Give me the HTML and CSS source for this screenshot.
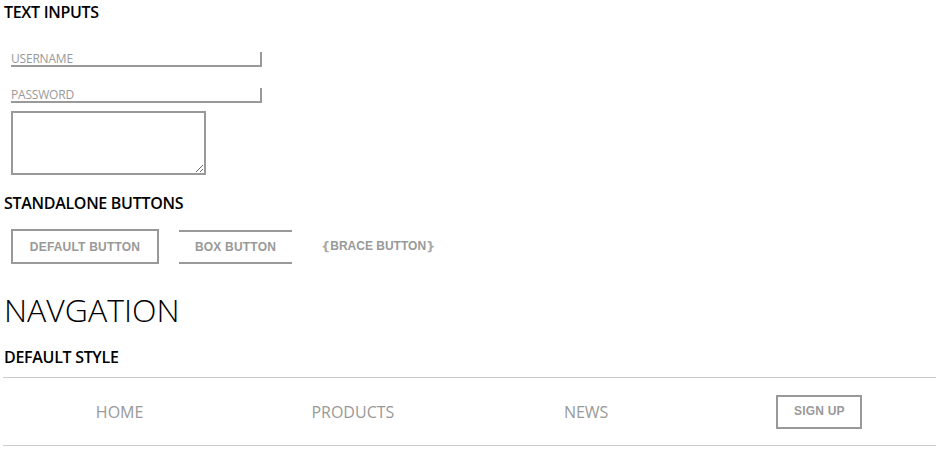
FILE: index.html
```html
<!DOCTYPE html>
<html>
<head>
<meta charset="utf-8">
<link rel="stylesheet" href="styles.css">
</head>
<body>
<div class="page">
  <h3 class="label">TEXT INPUTS</h3>
  <div class="fields">
    <input class="field" type="text" placeholder="USERNAME">
    <input class="field field-pass" type="password" placeholder="PASSWORD">
    <textarea class="area"></textarea>
  </div>
  <h3 class="label label-buttons">STANDALONE BUTTONS</h3>
  <div class="buttons">
    <button class="btn btn-default">DEFAULT BUTTON</button>
    <button class="btn btn-box">BOX BUTTON</button>
    <button class="btn btn-brace"><span class="brace">{</span>BRACE BUTTON<span class="brace">}</span></button>
  </div>
  <h1 class="title">NAVGATION</h1>
  <h3 class="label label-nav">DEFAULT STYLE</h3>
  <nav class="nav">
    <a class="nav-item">HOME</a>
    <a class="nav-item">PRODUCTS</a>
    <a class="nav-item">NEWS</a>
    <div class="nav-item"><button class="btn btn-signup">SIGN UP</button></div>
  </nav>
</div>
</body>
</html>
```

FILE: styles.css
```css
* { box-sizing: border-box; }
html, body { margin: 0; padding: 0; background: #fff; }
body { font-family: "Open Sans", "Liberation Sans", sans-serif; color: #000; }
.page { width: 936px; padding: 2px 0 0 3px; display: flex; flex-direction: column; align-items: flex-start; }
.label { margin: 0; font-size: 16px; font-weight: 600; line-height: 20px; padding-left: 1px; letter-spacing: -0.3px; }
.fields { display: flex; flex-direction: column; padding-left: 8px; margin-top: 30px; }
.field {
  display: block; width: 251px; height: 15px; padding: 0; margin: 0;
  border: 0; border-right: 2px solid #999; border-bottom: 2px solid #999;
  font-family: "Open Sans", sans-serif; font-size: 12px; line-height: 13px; color: #999;
  outline: none; background: transparent; letter-spacing: -0.2px;
}
.field::placeholder { color: #999; opacity: 1; }
.field-pass { margin-top: 21px; }
.area {
  display: block; width: 195px; height: 64px; margin-top: 8px;
  border: 2px solid #999; padding: 2px; resize: both; font-family: "Open Sans", sans-serif;
}
.label-buttons { margin-top: 18px; }
.buttons { display: flex; align-items: center; padding-left: 8px; margin-top: 16px; }
.btn {
  font-family: "Liberation Sans", Arial, sans-serif; font-weight: 700; font-size: 12px;
  color: #999; background: transparent; line-height: 15px; margin: 0; cursor: pointer; letter-spacing: 0.2px;
}
.btn-default { border: 2px solid #999; padding: 9px 14px 7px; width: 148px; height: 35px; }
.btn-box { border: 0; border-top: 2px solid #999; border-bottom: 2px solid #999; padding: 8px 14px; margin-left: 20px; width: 113px; height: 34px; }
.btn-brace { border: 0; padding: 8px 0; margin-left: 29px; display: flex; align-items: center; letter-spacing: 0; }
.brace { font-family: "DejaVu Sans", sans-serif; font-weight: 700; font-size: 13px; color: #aaa; line-height: 15px; }
.title { margin: 23px 0 0; font-size: 32px; font-weight: 300; line-height: 45px; padding-left: 1px; }
.label-nav { margin-top: 15px; }
.nav {
  width: 933px; margin-top: 10px; display: grid; grid-template-columns: repeat(4, 1fr);
  border-top: 1px solid #ccc; border-bottom: 1px solid #ccc; height: 69px; align-items: center;
}
.nav-item { text-align: center; font-size: 16px; color: #999; display: flex; justify-content: center; }
.btn-signup { border: 2px solid #999; padding: 7px 14px; width: 86px; height: 34px; }
```
